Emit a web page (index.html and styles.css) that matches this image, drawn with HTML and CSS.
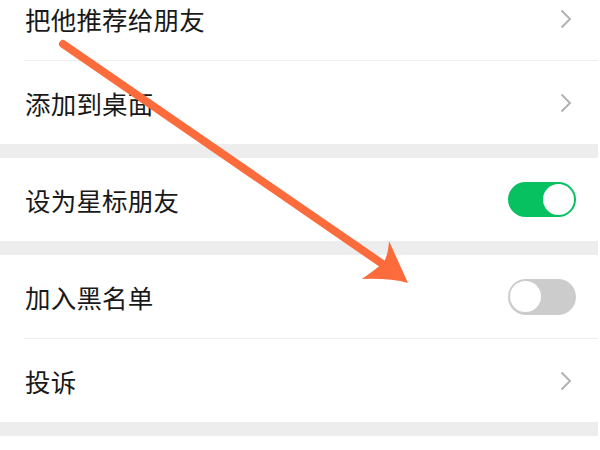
FILE: index.html
```html
<!DOCTYPE html>
<html lang="zh-CN">
<head>
<meta charset="utf-8">
<title>设置</title>
<link rel="stylesheet" href="styles.css">
</head>
<body>
<div class="page">
  <div class="list">
    <div class="group">
      <div class="row first">
        <div class="row-body divided">
          <span class="label">把他推荐给朋友</span>
          <svg class="chev" viewBox="0 0 12 20" width="12" height="20"><path d="M1.5 1.5 L10 10 L1.5 18.5" fill="none" stroke="#b2b2b2" stroke-width="2"/></svg>
        </div>
      </div>
      <div class="row">
        <div class="row-body">
          <span class="label">添加到桌面</span>
          <svg class="chev" viewBox="0 0 12 20" width="12" height="20"><path d="M1.5 1.5 L10 10 L1.5 18.5" fill="none" stroke="#b2b2b2" stroke-width="2"/></svg>
        </div>
      </div>
    </div>
    <div class="band"></div>
    <div class="group">
      <div class="row">
        <div class="row-body">
          <span class="label">设为星标朋友</span>
          <span class="switch on"><span class="knob"></span></span>
        </div>
      </div>
    </div>
    <div class="band"></div>
    <div class="group">
      <div class="row">
        <div class="row-body divided">
          <span class="label">加入黑名单</span>
          <span class="switch off"><span class="knob"></span></span>
        </div>
      </div>
      <div class="row">
        <div class="row-body">
          <span class="label">投诉</span>
          <svg class="chev" viewBox="0 0 12 20" width="12" height="20"><path d="M1.5 1.5 L10 10 L1.5 18.5" fill="none" stroke="#b2b2b2" stroke-width="2"/></svg>
        </div>
      </div>
    </div>
    <div class="band last"></div>
  </div>
  <svg class="arrow" viewBox="0 0 600 450" width="600" height="450">
    <line x1="63" y1="44" x2="384" y2="265" stroke="#fc6b3c" stroke-width="8" stroke-linecap="round"/>
    <path d="M408 283 L389 241 Q388 258 382 264 Q372 272 362 279 Q390 278 408 283 Z" fill="#fc6b3c"/>
  </svg>
</div>
</body>
</html>
```
FILE: styles.css
```css
* { box-sizing: border-box; }
html, body {
  margin: 0;
  padding: 0;
  background: #ffffff;
}
body {
  font-family: "Noto Sans CJK SC", "Noto Sans", sans-serif;
  color: #191919;
}
.page {
  position: relative;
  width: 600px;
  height: 450px;
  overflow: hidden;
  background: #ffffff;
}
.list {
  width: 598px;
  margin-top: -23px;
  display: flex;
  flex-direction: column;
}
.row {
  padding-left: 24px;
  background: #ffffff;
}
.row-body {
  height: 83px;
  display: flex;
  align-items: center;
  justify-content: space-between;
  padding-right: 22px;
}
.row-body.divided {
  height: 84px;
  border-bottom: 1px solid #efefef;
}
.row.first .row-body { height: 84px; }
.label {
  font-size: 25.5px;
  line-height: 1;
  letter-spacing: 0.2px;
  padding-left: 1px;
}
.chev {
  display: block;
  margin-right: 4px;
}
.band {
  height: 14px;
  background: #ededed;
}
.switch {
  position: relative;
  display: block;
  width: 68px;
  height: 35px;
  border-radius: 18px;
  margin-right: 0;
}
.switch.on {
  background: #07c160;
}
.switch.off {
  background: #cccccc;
  height: 36px;
}
.knob {
  position: absolute;
  top: 2px;
  width: 31px;
  height: 31px;
  border-radius: 50%;
  background: #ffffff;
}
.switch.on .knob { right: 2px; }
.switch.off .knob { left: 2px; top: 2.5px; }
.arrow {
  position: absolute;
  left: 0;
  top: 0;
  pointer-events: none;
}
```
